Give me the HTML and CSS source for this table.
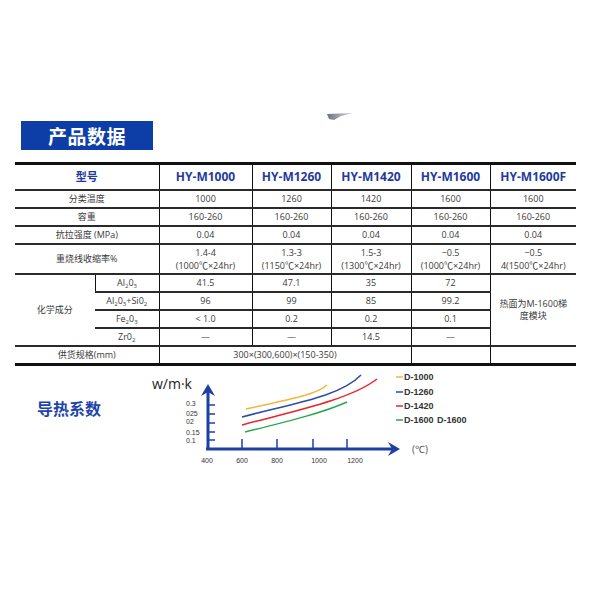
FILE: index.html
```html
<!DOCTYPE html>
<html lang="zh">
<head>
<meta charset="utf-8">
<title>产品数据</title>
<link rel="stylesheet" href="styles.css">
</head>
<body>
<div class="page">
  <div class="deco">
    <svg class="wedge" width="26" height="8" viewBox="0 0 26 8"><defs><linearGradient id="wg" x1="0" x2="1"><stop offset="0" stop-color="#6f747e"/><stop offset="1" stop-color="#d6d9de"/></linearGradient></defs><polygon points="0,1 26,0 14,3 7,7 2,6" fill="url(#wg)"/></svg>
  </div>
  <div class="title">产品数据</div>
  <table class="spec">
    <colgroup>
      <col class="c-a"><col class="c-b"><col class="c-1"><col class="c-2"><col class="c-3"><col class="c-4"><col class="c-5">
    </colgroup>
    <tr class="head">
      <th colspan="2" class="lbl">型号</th>
      <th>HY-M1000</th><th>HY-M1260</th><th>HY-M1420</th><th>HY-M1600</th><th>HY-M1600F</th>
    </tr>
    <tr class="r">
      <td colspan="2" class="lbl">分类温度</td><td>1000</td><td>1260</td><td>1420</td><td>1600</td><td>1600</td>
    </tr>
    <tr class="r">
      <td colspan="2" class="lbl">容重</td><td>160-260</td><td>160-260</td><td>160-260</td><td>160-260</td><td>160-260</td>
    </tr>
    <tr class="r">
      <td colspan="2" class="lbl">抗拉强度 (MPa)</td><td>0.04</td><td>0.04</td><td>0.04</td><td>0.04</td><td>0.04</td>
    </tr>
    <tr class="tall">
      <td colspan="2" class="lbl">重烧线收缩率%</td>
      <td>1.4-4<br>(1000℃×24hr)</td>
      <td>1.3-3<br>(1150℃×24hr)</td>
      <td>1.5-3<br>(1300℃×24hr)</td>
      <td>−0.5<br>(1000℃×24hr)</td>
      <td>−0.5<br>4(1500℃×24hr)</td>
    </tr>
    <tr class="r">
      <td rowspan="4" class="lbl">化学成分</td>
      <td class="sub">Al<sub>2</sub>0<sub>3</sub></td><td>41.5</td><td>47.1</td><td>35</td><td>72</td>
      <td rowspan="4" class="note">热面为M-1600梯度模块</td>
    </tr>
    <tr class="r">
      <td class="sub">Al<sub>2</sub>0<sub>3</sub>+Si0<sub>2</sub></td><td>96</td><td>99</td><td>85</td><td>99.2</td>
    </tr>
    <tr class="r">
      <td class="sub">Fe<sub>2</sub>0<sub>3</sub></td><td>&lt; 1.0</td><td>0.2</td><td>0.2</td><td>0.1</td>
    </tr>
    <tr class="r">
      <td class="sub">Zr0<sub>2</sub></td><td>—</td><td>—</td><td>14.5</td><td>—</td>
    </tr>
    <tr class="r last">
      <td colspan="2" class="lbl">供货规格(mm)</td>
      <td colspan="3">300×(300,600)×(150-350)</td>
      <td></td><td></td>
    </tr>
  </table>

  <div class="chart-sec">
    <div class="chart-title">导热系数</div>
    <svg class="chart" width="340" height="105" viewBox="140 368 340 105">
      <text x="152" y="390" class="unit">w/m·k</text>
      <g class="axis">
        <line x1="208" y1="393" x2="208" y2="451"/>
        <line x1="206" y1="450" x2="394" y2="450"/>
      </g>
      <polygon points="208,385 201,397 208,393 215,397" fill="#1d3fa3"/>
      <polygon points="400,450 388,443 392,450 388,457" fill="#1d3fa3"/>
      <g class="ticks">
        <line x1="208" y1="406" x2="215" y2="406"/>
        <line x1="208" y1="415" x2="215" y2="415"/>
        <line x1="208" y1="424" x2="215" y2="424"/>
        <line x1="208" y1="433" x2="215" y2="433"/>
        <line x1="208" y1="441" x2="215" y2="441"/>
        <line x1="242" y1="440" x2="242" y2="450"/>
        <line x1="277" y1="440" x2="277" y2="450"/>
        <line x1="313" y1="440" x2="313" y2="450"/>
        <line x1="347" y1="440" x2="347" y2="450"/>
      </g>
      <g class="ylab">
        <text x="186" y="407">0.3</text>
        <text x="186" y="417">025</text>
        <text x="186" y="425">02</text>
        <text x="186" y="436">0.15</text>
        <text x="186" y="444">0.1</text>
      </g>
      <g class="xlab">
        <text x="207" y="464">400</text>
        <text x="242" y="464">600</text>
        <text x="277" y="464">800</text>
        <text x="319" y="464">1000</text>
        <text x="355" y="464">1200</text>
      </g>
      <text x="412" y="454" class="deg">(℃)</text>
      <g class="curves">
        <path d="M246 410 C280 402, 315 397, 327 386" stroke="#f3b53a"/>
        <path d="M242 418 C290 405, 340 398, 361 376" stroke="#2f4aa6"/>
        <path d="M242 426 C290 413, 350 401, 377 380" stroke="#e8252b"/>
        <path d="M245 433 C290 422, 325 413, 347 403" stroke="#2ca64c"/>
      </g>
      <g class="legend">
        <line x1="396" y1="378" x2="403" y2="378" stroke="#f3b53a"/>
        <line x1="396" y1="393" x2="403" y2="393" stroke="#2f4aa6"/>
        <line x1="396" y1="407" x2="403" y2="407" stroke="#e8252b"/>
        <line x1="396" y1="421" x2="403" y2="421" stroke="#2ca64c"/>
        <text x="404" y="381">D-1000</text>
        <text x="404" y="396">D-1260</text>
        <text x="404" y="410">D-1420</text>
        <text x="404" y="424">D-1600</text>
        <text x="437" y="424">D-1600</text>
      </g>
    </svg>
  </div>
</div>
</body>
</html>
```

FILE: styles.css
```css
html, body {
  margin: 0;
  padding: 0;
  background: #fff;
}
.page {
  width: 600px;
  height: 600px;
  font-family: "Open Sans", "Noto Sans CJK SC", sans-serif;
  color: #3a3a3a;
}
.deco {
  height: 121px;
  box-sizing: border-box;
  padding: 113px 0 0 327px;
}
.wedge {
  display: block;
}
.title {
  margin-left: 21px;
  width: 132px;
  height: 29px;
  background: #0d3ea8;
  color: #fff;
  font-family: "Noto Sans CJK SC", sans-serif;
  font-weight: 700;
  font-size: 19px;
  line-height: 29px;
  text-align: center;
  letter-spacing: 0.5px;
}
.spec {
  margin: 12px 0 0 15px;
  width: 561px;
  table-layout: fixed;
  border-collapse: collapse;
  border-top: 3px solid #111;
  border-bottom: 3px solid #111;
  font-size: 9px;
}
.c-a { width: 80px; }
.c-b { width: 64px; }
.c-1 { width: 93px; }
.c-2 { width: 79px; }
.c-3 { width: 80px; }
.c-4 { width: 79px; }
.c-5 { width: 86px; }
.spec th, .spec td {
  padding: 0;
  text-align: center;
  vertical-align: middle;
  border-bottom: 2px solid #2a2a2a;
  border-left: 1px solid #111;
  line-height: 11px;
  white-space: nowrap;
}
.spec tr > :first-child {
  border-left: none;
}
.spec th {
  color: #1f3b9b;
  font-size: 12px;
  font-weight: 700;
}
.spec th.lbl {
  font-family: "Noto Sans CJK SC", sans-serif;
  font-size: 11px;
}
.head { height: 26px; }
.r { height: 18px; }
.tall { height: 30px; }
.tall td {
  line-height: 13px;
}
.last { height: 19px; }
.lbl {
  font-family: "Open Sans", "Noto Sans CJK SC", sans-serif;
}
.sub sub {
  font-size: 6px;
  vertical-align: -2px;
  line-height: 0;
}
.note {
  white-space: normal !important;
  padding: 0 6px !important;
  line-height: 12px !important;
}
.last td {
  border-bottom: none;
}
.chart-sec {
  display: flex;
  align-items: flex-start;
  margin-top: 1px;
}
.chart-title {
  width: 140px;
  box-sizing: border-box;
  padding: 31px 0 0 37px;
  font-family: "Noto Sans CJK SC", sans-serif;
  font-weight: 700;
  font-size: 16px;
  line-height: 20px;
  color: #1d44a8;
  white-space: nowrap;
}
.chart {
  display: block;
}
.unit {
  font-family: "Open Sans", sans-serif;
  font-size: 14px;
  fill: #222;
}
.axis line {
  stroke: #1d3fa3;
  stroke-width: 3;
}
.ticks line {
  stroke: #1d3fa3;
  stroke-width: 1.5;
}
.ylab text, .xlab text {
  font-family: "Liberation Sans", sans-serif;
  font-size: 7px;
  fill: #333;
}
.xlab text {
  text-anchor: middle;
}
.deg {
  font-family: "Open Sans", sans-serif;
  font-size: 10px;
  fill: #555;
}
.curves path {
  fill: none;
  stroke-width: 1.5;
}
.legend line {
  stroke-width: 1.5;
}
.legend text {
  font-family: "Liberation Sans", sans-serif;
  font-weight: 700;
  font-size: 9px;
  fill: #333;
}
```
